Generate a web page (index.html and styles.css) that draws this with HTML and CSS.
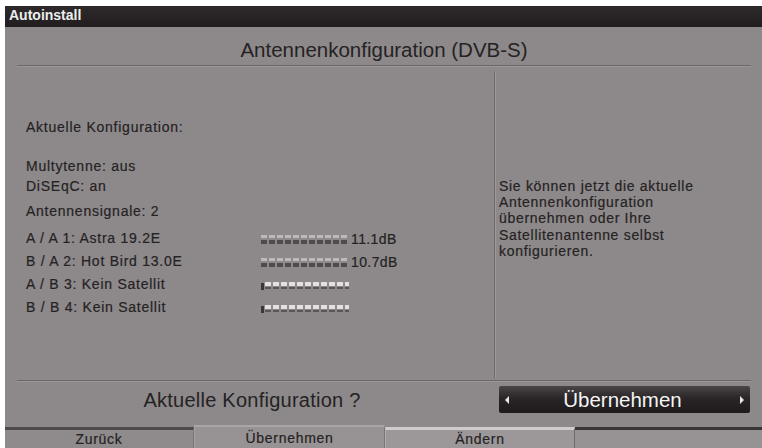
FILE: index.html
```html
<!DOCTYPE html>
<html>
<head>
<meta charset="utf-8">
<link rel="stylesheet" href="styles.css">
</head>
<body>
<div class="screen">
  <div class="titlebar">Autoinstall</div>
  <div class="header"><span class="title">Antennenkonfiguration (DVB-S)</span></div>
  <div class="content">
    <div class="left">
      <div class="line l-head">Aktuelle Konfiguration:</div>
      <div class="line l-multi">Multytenne: aus</div>
      <div class="line l-diseqc">DiSEqC: an</div>
      <div class="line l-sig">Antennensignale: 2</div>
      <div class="sat-list">
        <div class="sat">
          <span class="sat-name">A / A 1: Astra 19.2E</span>
          <span class="bar full"></span>
          <span class="db">11.1dB</span>
        </div>
        <div class="sat">
          <span class="sat-name">B / A 2: Hot Bird 13.0E</span>
          <span class="bar full"></span>
          <span class="db">10.7dB</span>
        </div>
        <div class="sat">
          <span class="sat-name">A / B 3: Kein Satellit</span>
          <span class="bar empty"></span>
        </div>
        <div class="sat">
          <span class="sat-name">B / B 4: Kein Satellit</span>
          <span class="bar empty"></span>
        </div>
      </div>
    </div>
    <div class="right">
      <p class="info">Sie können jetzt die aktuelle<br>Antennenkonfiguration<br>übernehmen oder Ihre<br>Satellitenantenne selbst<br>konfigurieren.</p>
    </div>
  </div>
  <div class="action">
    <div class="question">Aktuelle Konfiguration ?</div>
    <div class="button">
      <span class="arrow arrow-left"></span>
      <span class="btn-label">Übernehmen</span>
      <span class="arrow arrow-right"></span>
    </div>
  </div>
  <div class="tabs">
    <div class="tab tab-back">Zurück</div>
    <div class="tab tab-accept">Übernehmen</div>
    <div class="tab tab-change">Ändern</div>
    <div class="tab tab-empty"></div>
  </div>
</div>
</body>
</html>
```
FILE: styles.css
```css
html, body {
  margin: 0;
  padding: 0;
  background: #ffffff;
}
body {
  width: 762px;
  height: 448px;
  overflow: hidden;
  font-family: "Liberation Sans", Arial, sans-serif;
  color: #252223;
}
.screen {
  margin: 6px 0 0 5px;
  width: 757px;
  height: 442px;
  background: #8d898a;
  display: flex;
  flex-direction: column;
}
.titlebar {
  height: 21px;
  line-height: 19px;
  background: linear-gradient(#2e2a2b, #221e1f);
  color: #eeeeee;
  font-weight: bold;
  font-size: 14px;
  padding-left: 4px;
}
.header {
  height: 38px;
  margin: 0 11px 0 12px;
  border-bottom: 1px solid #6b6768;
  box-shadow: 0 1px 0 #9c9899;
  display: flex;
  justify-content: center;
  align-items: flex-start;
}
.title {
  font-size: 20.5px;
  margin-top: 11px;
  color: #252223;
}
.content {
  height: 315px;
  display: flex;
  margin: 0 11px 0 12px;
  border-bottom: 1px solid #6b6768;
  box-shadow: 0 1px 0 #9c9899;
}
.left {
  box-sizing: border-box;
  width: 478px;
  padding-left: 9px;
  margin: 5px 0 2px 0;
  border-right: 1px solid #6f6b6c;
  box-shadow: 1px 0 0 #9d999a;
  font-size: 14px;
  letter-spacing: 0.75px;
  -webkit-text-stroke: 0.2px #252223;
}
.line {
  height: 16px;
  line-height: 16px;
}
.l-head { margin-top: 48px; }
.l-multi { margin-top: 23px; }
.l-diseqc { margin-top: 4px; }
.l-sig { margin-top: 9px; }
.sat-list {
  margin-top: 11px;
  display: flex;
  flex-direction: column;
  gap: 7px;
}
.sat {
  height: 16px;
  line-height: 16px;
  display: flex;
  align-items: center;
}
.sat-name {
  width: 235px;
}
.bar {
  width: 88px;
  height: 9px;
  margin-top: 3px;
}
.bar.full {
  background:
    repeating-linear-gradient(90deg, #bdb9ba 0 6px, transparent 6px 8px) top / 100% 3px no-repeat,
    repeating-linear-gradient(90deg, #4f4b4c 0 6px, transparent 6px 8px) bottom / 100% 4px no-repeat;
}
.bar.empty {
  background:
    linear-gradient(#3a3637, #3a3637) left bottom / 3px 7px no-repeat,
    repeating-linear-gradient(90deg, #e4e0e1 0 6px, transparent 6px 8px) 4px 1px / 84px 4px no-repeat,
    repeating-linear-gradient(90deg, #5a5657 0 6px, transparent 6px 8px) 4px 6px / 84px 2px no-repeat;
}
.db {
  margin-left: 2px;
  margin-top: 3px;
  letter-spacing: 0.4px;
}
.right {
  flex: 1;
  padding-left: 4px;
  font-size: 14px;
  letter-spacing: 0.7px;
  -webkit-text-stroke: 0.2px #252223;
}
.info {
  margin: 112px 0 0 0;
  line-height: 16.3px;
}
.action {
  height: 37px;
  display: flex;
  align-items: center;
}
.question {
  width: 494px;
  text-align: center;
  font-size: 20px;
  letter-spacing: 0.25px;
  color: #252223;
  padding-top: 1px;
}
.button {
  width: 251px;
  height: 27px;
  margin-top: 0;
  border-radius: 2px;
  background: linear-gradient(#4a4647, #2a2627 45%, #1e1a1b);
  color: #f4f4f4;
  display: flex;
  align-items: center;
  justify-content: space-between;
  padding: 0 6px;
  box-sizing: border-box;
}
.btn-label {
  font-size: 20.5px;
  padding-right: 4px;
}
.arrow {
  width: 0;
  height: 0;
  border-top: 4px solid transparent;
  border-bottom: 4px solid transparent;
}
.arrow-left { border-right: 4px solid #e8e8e8; }
.arrow-right { border-left: 4px solid #e8e8e8; }
.tabs {
  margin-top: 9px;
  flex: 1;
  display: flex;
}
.tab {
  box-sizing: border-box;
  text-align: center;
  font-size: 14px;
  letter-spacing: 0.7px;
  line-height: 17px;
  padding-top: 1px;
  color: #252223;
  -webkit-text-stroke: 0.2px #252223;
}
.tab-back {
  width: 189px;
  background: #8f8b8c;
  border-top: 3px solid #4e4a4b;
  border-right: 1px solid #7b7778;
}
.tab-accept {
  width: 191px;
  background: #979394;
  border-top: 2px solid #a9a5a6;
  border-left: 1px solid #a5a1a2;
  border-right: 1px solid #7b7778;
  margin-top: -2px;
  padding-top: 3px;
}
.tab-change {
  width: 190px;
  background: #9c9899;
  border-top: 3px solid #cfcbcc;
  border-left: 1px solid #b0acad;
  border-right: 1px solid #6f6b6c;
}
.tab-empty {
  flex: 1;
  background: #979394;
  border-top: 3px solid #3a3637;
}
```
